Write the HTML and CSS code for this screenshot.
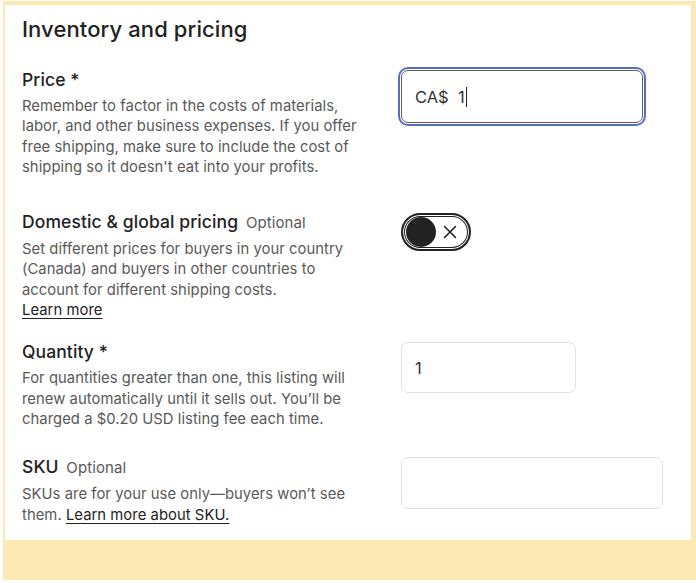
FILE: index.html
```html
<!DOCTYPE html>
<html lang="en">
<head>
<meta charset="utf-8">
<title>Inventory and pricing</title>
<link rel="stylesheet" href="styles.css">
</head>
<body>
<div class="frame">
  <section class="card">
    <h2 class="title">Inventory and pricing</h2>

    <div class="row row-price">
      <div class="info">
        <div class="label">Price *</div>
        <p class="desc">Remember to factor in the costs of materials, labor, and other business expenses. If you offer free shipping, make sure to include the cost of shipping so it doesn't eat into your profits.</p>
      </div>
      <div class="control">
        <div class="input input-price focused"><span class="value">CA$&nbsp; 1</span><span class="caret"></span></div>
      </div>
    </div>

    <div class="row row-global">
      <div class="info">
        <div class="label">Domestic &amp; global pricing <span class="optional">Optional</span></div>
        <p class="desc">Set different prices for buyers in your country (Canada) and buyers in other countries to account for different shipping costs.<br><a class="link" href="#">Learn more</a></p>
      </div>
      <div class="control">
        <div class="toggle">
          <span class="knob"></span>
          <svg class="toggle-x" width="14" height="14" viewBox="0 0 14 14" aria-hidden="true"><path d="M1.5 1.5 L12.5 12.5 M12.5 1.5 L1.5 12.5" stroke="#222" stroke-width="1.6" fill="none" stroke-linecap="round"/></svg>
        </div>
      </div>
    </div>

    <div class="row row-qty">
      <div class="info">
        <div class="label">Quantity *</div>
        <p class="desc">For quantities greater than one, this listing will renew automatically until it sells out. You’ll be charged a $0.20 USD listing fee each time.</p>
      </div>
      <div class="control">
        <div class="input input-qty"><span class="value">1</span></div>
      </div>
    </div>

    <div class="row row-sku">
      <div class="info">
        <div class="label">SKU <span class="optional">Optional</span></div>
        <p class="desc">SKUs are for your use only—buyers won’t see them. <a class="link" href="#">Learn more about SKU.</a></p>
      </div>
      <div class="control">
        <div class="input input-sku"></div>
      </div>
    </div>
  </section>
</div>
</body>
</html>
```
FILE: styles.css
```css
* { box-sizing: border-box; }
html, body { margin: 0; padding: 0; background: #fff; }
body {
  font-family: "Inter", "Liberation Sans", sans-serif;
  color: #222;
}
.frame {
  margin: 1px 0 0 3px;
  width: 693px;
  height: 579px;
  background: #fde9b3;
  padding: 4px 5px 0 2px;
}
.card {
  background: #fff;
  height: 535px;
  padding: 10px 17px 0 17px;
}
.title {
  margin: 0;
  font-size: 22px;
  line-height: 28px;
  font-weight: 500;
  letter-spacing: 0.1px;
  color: #222;
}
.row {
  display: grid;
  grid-template-columns: 345px 1fr;
  column-gap: 34px;
}
.row-price { margin-top: 24px; }
.row-global { margin-top: 33px; }
.row-qty { margin-top: 20px; }
.row-sku { margin-top: 26px; }
.label {
  font-size: 17.5px;
  line-height: 24px;
  font-weight: 500;
  letter-spacing: 0.1px;
  color: #222;
}
.row-price .label { margin-top: 1px; }
.optional {
  font-size: 15px;
  font-weight: 400;
  letter-spacing: 0.1px;
  color: #595959;
  margin-left: 3px;
}
.desc {
  margin: 4px 0 0;
  font-size: 14.8px;
  line-height: 20.3px;
  letter-spacing: 0.05px;
  color: #595959;
}
.link {
  color: #222;
  text-decoration: underline;
  text-underline-offset: 3px;
}
.control { padding-top: 2px; }
.input {
  display: flex;
  align-items: center;
  border: 1px solid #e1e1e1;
  border-radius: 7px;
  background: #fff;
  padding: 0 13px;
  font-size: 16.5px;
  color: #333;
}
.input.focused {
  border-color: #5e5e5e;
  outline: 2px solid #5470c6;
  outline-offset: 1px;
}
.input-price { width: 242px; height: 53px; margin-top: 1px; }
.input-qty { width: 175px; height: 51px; }
.input-sku { width: 262px; height: 52px; }
.caret {
  display: inline-block;
  width: 1px;
  height: 20px;
  background: #222;
  margin-left: 1px;
}
.toggle {
  width: 70px;
  height: 38px;
  margin-top: 1px;
  border: 2px solid #222;
  border-radius: 20px;
  box-shadow: inset 0 0 0 1px #fff, inset 0 0 0 2px #222;
  display: flex;
  align-items: center;
  padding-left: 3px;
}
.knob {
  width: 30px;
  height: 30px;
  border-radius: 50%;
  background: #222;
}
.toggle-x { margin-left: 7px; }
```
